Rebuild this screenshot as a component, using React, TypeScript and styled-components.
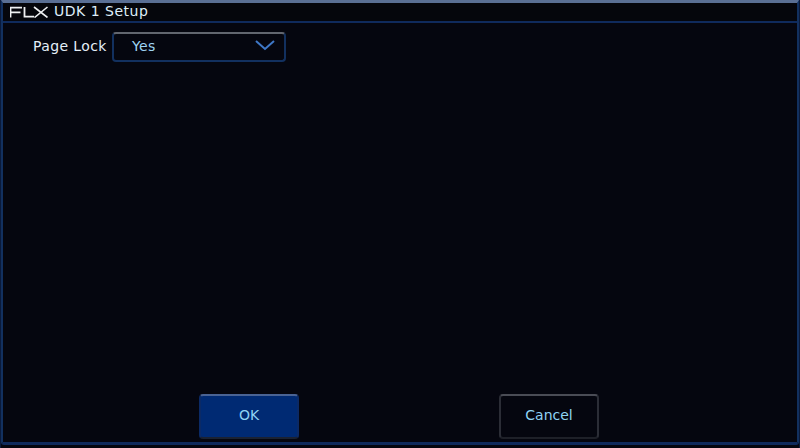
import React from "react";
import styled, { createGlobalStyle } from "styled-components";

const Global = createGlobalStyle`
  html, body { margin: 0; padding: 0; background: #000; }
  body { font-family: "DejaVu Sans", sans-serif; }
`;

const Frame = styled.div`
  box-sizing: border-box;
  width: 800px;
  height: 448px;
  display: flex;
  flex-direction: column;
  background: #05060f;
  border-left: 1px solid #0b1a3a;
  border-right: 1px solid #0b1a3a;
  overflow: hidden;
`;

const Window = styled.div`
  flex: 1;
  display: flex;
  flex-direction: column;
  min-height: 0;
  margin-bottom: 3px;
  border-left: 2px solid #12305f;
  border-right: 2px solid #12305f;
  border-bottom: 3px solid #0f2a5c;
  border-top: 3px solid #5a6f94;
  border-bottom-left-radius: 3px;
  border-bottom-right-radius: 3px;
`;

const TitleBar = styled.div`
  height: 18px;
  display: flex;
  align-items: center;
  gap: 5px;
  padding-left: 7px;
  border-bottom: 2px solid #0f2a5c;
  background: #05060c;
`;

const Title = styled.span`
  color: #dfeefa;
  font-size: 14px;
  letter-spacing: 0.5px;
  margin-top: -2px;
`;

const Body = styled.div`
  flex: 1;
  display: flex;
  flex-direction: column;
  justify-content: space-between;
  padding: 9px 0 3px;
`;

const Row = styled.div`
  display: flex;
  align-items: center;
  gap: 5px;
  padding-left: 30px;
`;

const Label = styled.label`
  color: #e4eef8;
  font-size: 14px;
  letter-spacing: 0.4px;
  padding-bottom: 3px;
`;

const Select = styled.div`
  box-sizing: border-box;
  width: 174px;
  height: 30px;
  display: flex;
  align-items: center;
  justify-content: space-between;
  padding: 0 9px 3px 18px;
  background: #05060f;
  border: 2px solid #12305f;
  border-top: 2px solid #62666f;
  border-radius: 4px;
  color: #9fd4f2;
  font-size: 14px;
  letter-spacing: 0.4px;
`;

const Footer = styled.div`
  display: flex;
  justify-content: center;
  gap: 200px;
  padding-right: 2px;
`;

const Button = styled.button<{ $primary?: boolean }>`
  box-sizing: border-box;
  width: 100px;
  height: 45px;
  padding: 0 0 3px;
  font-family: inherit;
  font-size: 14px;
  color: #8fd3f4;
  border-radius: 4px;
  background: ${(p) => (p.$primary ? "#002a73" : "#05060f")};
  border: 2px solid ${(p) => (p.$primary ? "#0b2a66" : "#2b2d36")};
  border-top: 2px solid ${(p) => (p.$primary ? "#4a6394" : "#4a4c55")};
  border-bottom: 2px solid ${(p) => (p.$primary ? "#1a2233" : "#1e2028")};
`;

const Logo = () => (
  <svg width="39" height="12" viewBox="0 0 39 12" fill="none" stroke="#eef0f2" strokeWidth="1.8">
    <path d="M0.5 11.5V1.6H12M0.5 6.3H10.5" />
    <path d="M14.5 1V10.7H24" />
    <path d="M24 1L37.5 11.5M37.5 1L24.5 11.5" strokeWidth="1.6" />
  </svg>
);

const Chevron = () => (
  <svg width="20" height="11" viewBox="0 0 20 11" fill="none" stroke="#3f78c8" strokeWidth="2">
    <path d="M1 1L10 9L19 1" />
  </svg>
);

export default function App() {
  return (
    <>
      <Global />
      <Frame>
        <Window>
          <TitleBar>
            <Logo />
            <Title>UDK 1 Setup</Title>
          </TitleBar>
          <Body>
            <Row>
              <Label>Page Lock</Label>
              <Select>
                Yes
                <Chevron />
              </Select>
            </Row>
            <Footer>
              <Button $primary>OK</Button>
              <Button>Cancel</Button>
            </Footer>
          </Body>
        </Window>
      </Frame>
    </>
  );
}
